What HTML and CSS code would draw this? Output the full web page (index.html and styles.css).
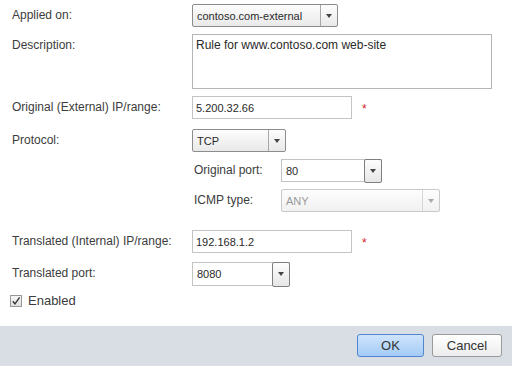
FILE: index.html
```html
<!DOCTYPE html>
<html lang="en">
<head>
  <meta charset="UTF-8" />
  <title>NAT Rule</title>
  <link rel="stylesheet" href="styles.css">
</head>
<body>
  <form class="dialog">
    <div class="fields">
      <div class="row">
        <label class="lbl">Applied on:</label>
        <div class="select w-applied">
          <span class="val">contoso.com-external</span>
          <span class="arrow"><i></i></span>
        </div>
      </div>
      <div class="row">
        <label class="lbl">Description:</label>
        <div class="textarea">Rule for www.contoso.com web-site</div>
      </div>
      <div class="row">
        <label class="lbl">Original (External) IP/range:</label>
        <div class="input w-ip">5.200.32.66</div>
        <span class="req">*</span>
      </div>
      <div class="row">
        <label class="lbl">Protocol:</label>
        <div class="select w-proto">
          <span class="val">TCP</span>
          <span class="arrow"><i></i></span>
        </div>
      </div>
      <div class="sub">
        <div class="row">
          <label class="sublbl">Original port:</label>
          <div class="combo w-oport">
            <span class="val">80</span>
            <span class="arrow"><i></i></span>
          </div>
        </div>
        <div class="row">
          <label class="sublbl">ICMP type:</label>
          <div class="select disabled w-icmp">
            <span class="val">ANY</span>
            <span class="arrow"><i></i></span>
          </div>
        </div>
      </div>
      <div class="row gap-top">
        <label class="lbl">Translated (Internal) IP/range:</label>
        <div class="input w-ip">192.168.1.2</div>
        <span class="req">*</span>
      </div>
      <div class="row">
        <label class="lbl">Translated port:</label>
        <div class="combo w-tport">
          <span class="val">8080</span>
          <span class="arrow"><i></i></span>
        </div>
      </div>
      <div class="check">
        <span class="box">
          <svg width="10" height="10" viewBox="0 0 10 10"><path d="M1.8 5.2 L4 7.8 L8.6 1.4" fill="none" stroke="#3a3a3a" stroke-width="1.4"/></svg>
        </span>
        <span>Enabled</span>
      </div>
    </div>
    <div class="footer">
      <button type="button" class="btn primary">OK</button>
      <button type="button" class="btn">Cancel</button>
    </div>
  </form>
</body>
</html>
```

FILE: styles.css
```css
* {
  box-sizing: border-box;
  margin: 0;
  padding: 0;
}
body {
  background-color: #fff;
  color: #3c3c3c;
  font-family: 'Liberation Sans', Arial, sans-serif;
  font-size: 12px;
}
.dialog {
  width: 512px;
  height: 366px;
  display: flex;
  flex-direction: column;
}
.fields {
  flex: 1;
  padding: 4px 0 0 12px;
}
.row {
  display: flex;
  align-items: flex-start;
  margin-bottom: 7px;
}
.lbl {
  width: 180px;
  line-height: 23px;
}
.sub {
  margin-left: 182px;
}
.sublbl {
  width: 87px;
  line-height: 23px;
}
.gap-top {
  margin-top: 18px;
  margin-bottom: 6px;
}
.select, .combo, .input {
  height: 23px;
  display: flex;
  align-items: center;
  font-size: 11px;
  color: #2a2a2a;
}
.select {
  border: 1px solid #8c8c8c;
  border-radius: 2px;
  background: linear-gradient(#fdfdfd, #e9e9e9);
}
.val {
  flex: 1;
  padding-left: 4px;
}
.arrow {
  width: 17px;
  height: 100%;
  border-left: 1px solid #a8a8a8;
  display: flex;
  align-items: center;
  justify-content: center;
}
.arrow i {
  width: 0;
  height: 0;
  border-left: 3.5px solid transparent;
  border-right: 3.5px solid transparent;
  border-top: 4px solid #444;
}
.combo {
  border: 1px solid #c4c4c4;
  background: #fff;
}
.combo .arrow {
  width: 18px;
  height: 24px;
  margin: -1px -1px -1px 0;
  border: 1px solid #7f7f7f;
  border-radius: 2px;
  background: linear-gradient(#fdfdfd, #e6e6e6);
}
.w-tport {
  height: 24px;
}
.w-tport .arrow {
  height: 25px;
}
.select.disabled {
  border-color: #c9c9c9;
  background: linear-gradient(#fdfdfd, #f1f1f1);
  color: #999;
}
.select.disabled .arrow {
  border-left-color: #d6d6d6;
}
.select.disabled .arrow i {
  border-top-color: #aaa;
}
.input {
  border: 1px solid #c4c4c4;
  padding-left: 3px;
}
.textarea {
  width: 300px;
  height: 55px;
  border: 1px solid #b5b5b5;
  padding: 3px 3px;
  font-size: 12px;
  color: #2a2a2a;
}
.req {
  color: #d6202a;
  font-size: 12px;
  margin-left: 10px;
  line-height: 26px;
}
.w-applied { width: 146px; }
.w-ip { width: 160px; }
.w-proto { width: 94px; }
.w-oport { width: 101px; }
.w-icmp { width: 159px; }
.w-tport { width: 98px; }
.check {
  display: flex;
  align-items: center;
  gap: 6px;
  margin: 5px 0 0 -2px;
  font-size: 13px;
  color: #3c3c3c;
}
.box {
  width: 12px;
  height: 12px;
  border: 1px solid #999;
  background: linear-gradient(#f6f6f6, #e0e0e0);
  display: flex;
  align-items: center;
  justify-content: center;
}
.footer {
  height: 40px;
  background-color: #d9dde4;
  display: flex;
  align-items: center;
  justify-content: flex-end;
  gap: 8px;
  padding: 0 10px 1px 0;
}
.btn {
  height: 23px;
  width: 70px;
  border: 1px solid #9a9a9a;
  border-radius: 3px;
  background: linear-gradient(#ffffff, #ececec);
  font-family: 'Liberation Sans', Arial, sans-serif;
  font-size: 13px;
  color: #333;
}
.btn.primary {
  width: 67px;
  border-color: #4f86cf;
  background: linear-gradient(#cfe4fc, #a3cbf6);
}
```
